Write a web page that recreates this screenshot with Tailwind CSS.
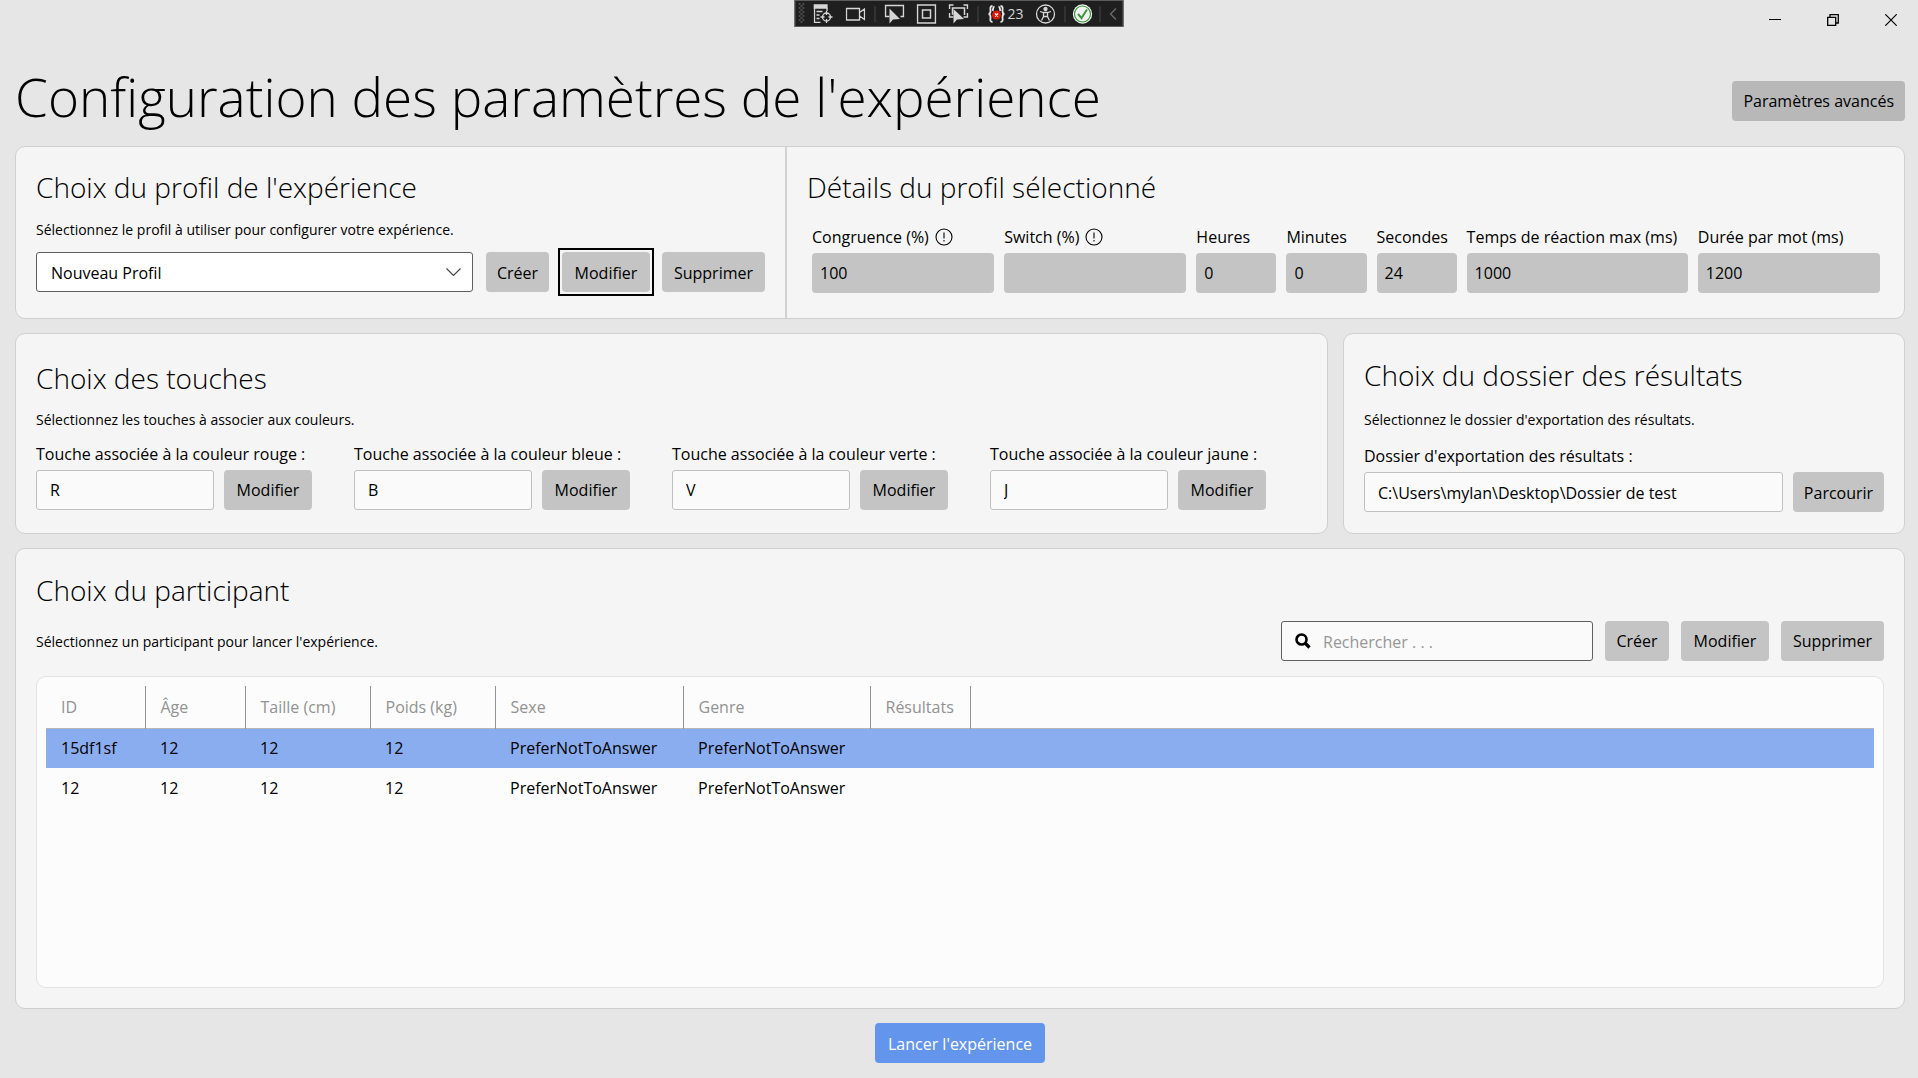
<!DOCTYPE html>
<html lang="fr">
<head>
<meta charset="utf-8">
<title>Configuration des paramètres de l'expérience</title>
<script src="https://cdn.jsdelivr.net/npm/@tailwindcss/browser@4"></script>
</head>
<body class="min-h-screen flex flex-col bg-[#e6e6e6] pl-[15px] pr-[13px] font-['Open_Sans','Noto_Sans',sans-serif] text-base leading-6 text-black">

  <!-- Debug toolbar -->
  <div class="absolute top-0 left-1/2 -translate-x-1/2 w-[329px] h-[27px] flex items-center gap-[9px] border border-[#5c5c5c] bg-[#1f1f1f] pl-[3px] text-[#d6d6d6]">
    <svg class="w-[6px] h-[21px]" viewBox="0 0 6 21" fill="#4d4d4d"><path d="M0 0h2v2H0zM4 0h2v2H4zM2 2h2v2H2zM0 4h2v2H0zM4 4h2v2H4zM2 6h2v2H2zM0 8h2v2H0zM4 8h2v2H4zM2 10h2v2H2zM0 12h2v2H0zM4 12h2v2H4zM2 14h2v2H2zM0 16h2v2H0zM4 16h2v2H4zM2 18h2v2H2z"/></svg>
    <div class="flex gap-3">
      <svg class="w-5 h-5" viewBox="0 0 20 20" fill="none" stroke="currentColor" stroke-width="1.3"><path d="M.5 1h13v3H.5z" fill="currentColor"/><path d="M1 4v14.400h6M13.500 4v3M3 7.500h6M3 11h3M3 14.500h3"/><circle cx="13" cy="13" r="4"/><path d="M13 7v4M13 15v4M7 13h4M15 13h4"/></svg>
      <svg class="w-5 h-5" viewBox="0 0 20 20" fill="none" stroke="currentColor" stroke-width="1.3"><path d="M1 4.500h13v11.500H1zM14 8.500l5-3.500v10.500l-5-3.500"/></svg>
    </div>
    <span class="w-px h-4 bg-[#474747]"></span>
    <div class="flex gap-3">
      <svg class="w-5 h-5" viewBox="0 0 20 20" fill="none" stroke="currentColor" stroke-width="1.500"><path d="M5 12.500H1V1.500h18v11h-3"/><path d="M5 4.500v15l3.500-4 7-.5z" fill="currentColor" stroke="none"/></svg>
      <svg class="w-5 h-5" viewBox="0 0 20 20" fill="none" stroke="currentColor" stroke-width="1.500"><path d="M1 1h18v18H1zM6 6h8v8H6z"/></svg>
      <svg class="w-5 h-5" viewBox="0 0 20 20" fill="none" stroke="currentColor" stroke-width="1.500"><path d="M1 5V1h4M15 1h4v4M1 9v4h4M15 13h4V9M5 10H4V4h12v7"/><path d="M5 5v14.500l3.500-4 7-.5z" fill="currentColor" stroke="none"/></svg>
    </div>
    <span class="w-px h-4 bg-[#474747]"></span>
    <div class="flex items-center gap-3">
      <span class="flex items-center gap-0.5 text-sm leading-5">
        <svg class="w-[18px] h-5" viewBox="0 0 18 20" fill="none" stroke="#e8e8e8" stroke-width="1.800"><path d="M5 2C2 2 3 5 3 7s-1 3-2 3c1 0 2 1 2 3s-1 5 2 5M13 2c3 0 2 3 2 5s1 3 2 3c-1 0-2 1-2 3s1 5-2 5M7 2.500c-2 .5-1 3-2 4.500M11 2.500c2 .5 1 3 2 4.500"/><circle cx="9" cy="11" r="4.500" fill="#e51400" stroke="none"/><path d="M7.500 9.500l3 3M10.500 9.500l-3 3" stroke="#fff" stroke-width="1.400"/></svg>
        23
      </span>
      <svg class="w-5 h-5" viewBox="0 0 20 20" fill="none" stroke="currentColor" stroke-width="1.300"><circle cx="10" cy="10" r="9"/><circle cx="10" cy="5" r="1.500" fill="currentColor"/><path d="M4.500 7.500l3.500 1h4l3.500-1M8 8.500v4L6 16.500M12 8.500v4l2 4M8 12.500h4"/></svg>
    </div>
    <div class="flex items-center gap-[7px]">
      <span class="w-px h-4 bg-[#474747]"></span>
      <svg class="w-5 h-5" viewBox="0 0 20 20" fill="none"><circle cx="10" cy="10" r="9.700" fill="#f2f2f2"/><circle cx="10" cy="10" r="8" stroke="#379a3b" stroke-width="1.200"/><path d="M5.500 10l3.500 4 5.500-8.500" stroke="#379a3b" stroke-width="2"/></svg>
      <span class="w-px h-4 bg-[#474747]"></span>
    </div>
    <svg class="w-[7px] h-3" viewBox="0 0 7 12" fill="none" stroke="#6a6a6a" stroke-width="1.400"><path d="M6.500.5L1 6l5.500 5.500"/></svg>
  </div>

  <!-- Window controls -->
  <div class="flex h-10 justify-end gap-[46px] pr-2">
    <button aria-label="Réduire" class="w-3"><svg class="w-3 h-3" viewBox="0 0 12 12" stroke="#000"><path d="M0 5.500h12"/></svg></button>
    <button aria-label="Restaurer" class="w-3"><svg class="w-3 h-3" viewBox="0 0 12 12" fill="none" stroke="#000" stroke-width="1.300"><path d="M.7 3.300h8v8h-8zM3 3V.7h8.300V9H9"/></svg></button>
    <button aria-label="Fermer" class="w-3"><svg class="w-3 h-3" viewBox="0 0 12 12" stroke="#000" stroke-width="1.200"><path d="M.3.300l11.400 11.400M11.700.300L.3 11.700"/></svg></button>
  </div>

  <header class="flex h-[106px] items-center justify-between pt-2">
    <h1 class="text-[53px] leading-[72px] font-light">Configuration des paramètres de l'expérience</h1>
    <button class="mt-2 h-10 rounded-sm bg-[#b8b8b8] px-[11px]">Paramètres avancés</button>
  </header>

  <main class="flex flex-1 flex-col gap-[14px]">
    <section class="flex h-[173px] rounded-[10px] border border-[#cfcfcf] bg-[#f5f5f5]">
      <div class="w-[771px] border-r-2 border-[#d2d2d2] pl-5 pt-5">
        <h2 class="text-[28px] leading-10 font-light">Choix du profil de l'expérience</h2>
        <p class="mt-[11px] text-sm leading-6">Sélectionnez le profil à utiliser pour configurer votre expérience.</p>
        <div class="mt-[10px] flex items-center">
          <div class="relative w-[437px]">
            <select aria-label="Profil" class="block h-10 w-full appearance-none rounded-[3px] border border-[#5f5f5f] bg-white pl-[14px] pt-px"><option>Nouveau Profil</option></select>
            <svg class="pointer-events-none absolute right-3 top-4 w-[15px] h-2" viewBox="0 0 15 8" fill="none" stroke="#444" stroke-width="1.100"><path d="M.5.500l7 7 7-7"/></svg>
          </div>
          <button class="ml-[13px] h-10 w-[63px] rounded-sm bg-[#c4c4c4] pt-px">Créer</button>
          <button class="-my-1 ml-[9px] h-12 w-24 border-2 border-black p-0.5"><span class="flex h-full items-center justify-center rounded-sm bg-[#c4c4c4] pt-px">Modifier</span></button>
          <button class="ml-2 h-10 w-[103px] rounded-sm bg-[#c4c4c4] pt-px">Supprimer</button>
        </div>
      </div>
      <div class="flex-1 pl-5 pr-6 pt-5">
        <h2 class="text-[28px] leading-10 font-light">Détails du profil sélectionné</h2>
        <div class="mt-[18px] ml-[5px] grid grid-cols-[182fr_182fr_80fr_80fr_80fr_221fr_182fr] gap-[10px] whitespace-nowrap">
          <div>
            <label for="cong" class="flex items-center gap-[6px]">Congruence (%) <svg class="w-[18px] h-[18px]" viewBox="0 0 18 18" fill="none" stroke="#000" stroke-width="1.100"><circle cx="9" cy="9" r="8"/><path d="M9 4.500v6M9 12v1.500"/></svg></label>
            <input id="cong" readonly value="100" class="mt-1 h-10 w-full rounded-sm bg-[#c4c4c4] px-2">
          </div>
          <div>
            <label for="switch" class="flex items-center gap-[6px]">Switch (%) <svg class="w-[18px] h-[18px]" viewBox="0 0 18 18" fill="none" stroke="#000" stroke-width="1.100"><circle cx="9" cy="9" r="8"/><path d="M9 4.500v6M9 12v1.500"/></svg></label>
            <input id="switch" readonly class="mt-1 h-10 w-full rounded-sm bg-[#c4c4c4] px-2">
          </div>
          <div><label for="heures" class="block">Heures</label><input id="heures" readonly value="0" class="mt-1 h-10 w-full rounded-sm bg-[#c4c4c4] px-2"></div>
          <div><label for="minutes" class="block">Minutes</label><input id="minutes" readonly value="0" class="mt-1 h-10 w-full rounded-sm bg-[#c4c4c4] px-2"></div>
          <div><label for="secondes" class="block">Secondes</label><input id="secondes" readonly value="24" class="mt-1 h-10 w-full rounded-sm bg-[#c4c4c4] px-2"></div>
          <div><label for="reaction" class="block">Temps de réaction max (ms)</label><input id="reaction" readonly value="1000" class="mt-1 h-10 w-full rounded-sm bg-[#c4c4c4] px-2"></div>
          <div><label for="duree" class="block">Durée par mot (ms)</label><input id="duree" readonly value="1200" class="mt-1 h-10 w-full rounded-sm bg-[#c4c4c4] px-2"></div>
        </div>
      </div>
    </section>

    <div class="grid h-[201px] grid-cols-[1313fr_562fr] gap-[15px]">
      <section class="rounded-[10px] border border-[#cfcfcf] bg-[#f5f5f5] pl-5 pt-6">
        <h2 class="text-[28px] leading-10 font-light">Choix des touches</h2>
        <p class="mt-[10px] text-sm leading-6">Sélectionnez les touches à associer aux couleurs.</p>
        <div class="mt-[10px] flex gap-[42px] whitespace-nowrap">
          <div class="w-[276px]"><label for="rouge" class="block">Touche associée à la couleur rouge :</label><div class="mt-1 flex gap-[10px]"><input id="rouge" readonly value="R" class="h-10 min-w-0 flex-1 rounded-[3px] border border-[#c0c0c0] bg-[#fafafa] px-[13px]"><button class="h-10 w-[88px] rounded-sm bg-[#c4c4c4]">Modifier</button></div></div>
          <div class="w-[276px]"><label for="bleue" class="block">Touche associée à la couleur bleue :</label><div class="mt-1 flex gap-[10px]"><input id="bleue" readonly value="B" class="h-10 min-w-0 flex-1 rounded-[3px] border border-[#c0c0c0] bg-[#fafafa] px-[13px]"><button class="h-10 w-[88px] rounded-sm bg-[#c4c4c4]">Modifier</button></div></div>
          <div class="w-[276px]"><label for="verte" class="block">Touche associée à la couleur verte :</label><div class="mt-1 flex gap-[10px]"><input id="verte" readonly value="V" class="h-10 min-w-0 flex-1 rounded-[3px] border border-[#c0c0c0] bg-[#fafafa] px-[13px]"><button class="h-10 w-[88px] rounded-sm bg-[#c4c4c4]">Modifier</button></div></div>
          <div class="w-[276px]"><label for="jaune" class="block">Touche associée à la couleur jaune :</label><div class="mt-1 flex gap-[10px]"><input id="jaune" readonly value="J" class="h-10 min-w-0 flex-1 rounded-[3px] border border-[#c0c0c0] bg-[#fafafa] px-[13px]"><button class="h-10 w-[88px] rounded-sm bg-[#c4c4c4]">Modifier</button></div></div>
        </div>
      </section>
      <section class="rounded-[10px] border border-[#cfcfcf] bg-[#f5f5f5] px-5 pt-[21px]">
        <h2 class="text-[28px] leading-10 font-light">Choix du dossier des résultats</h2>
        <p class="mt-[13px] text-sm leading-6">Sélectionnez le dossier d'exportation des résultats.</p>
        <label for="dossier" class="mt-3 block">Dossier d'exportation des résultats :</label>
        <div class="mt-1 flex gap-[10px]">
          <input id="dossier" value="C:\Users\mylan\Desktop\Dossier de test" class="h-10 min-w-0 flex-1 rounded-[3px] border border-[#c0c0c0] bg-[#fafafa] px-[13px] pt-px">
          <button class="h-10 w-[91px] rounded-sm bg-[#c4c4c4] pt-px">Parcourir</button>
        </div>
      </section>
    </div>

    <section class="flex flex-1 flex-col rounded-[10px] border border-[#cfcfcf] bg-[#f5f5f5] px-5 pb-5 pt-[21px]">
      <h2 class="text-[28px] leading-10 font-light">Choix du participant</h2>
      <div class="mt-[11px] flex items-center justify-between">
        <p class="pt-px text-sm leading-6">Sélectionnez un participant pour lancer l'expérience.</p>
        <div class="flex gap-3">
          <div class="relative w-[312px]">
            <svg class="absolute left-[14px] top-3 w-4 h-4" viewBox="0 0 16 16" fill="none" stroke="#000" stroke-width="2.600"><circle cx="6.500" cy="6.500" r="5"/><path d="M10 10l4.500 4.500" stroke-width="3.200"/></svg>
            <input type="search" aria-label="Rechercher" placeholder="Rechercher . . ." class="block h-10 w-full rounded-[3px] border border-[#5f5f5f] bg-[#fafafa] pl-[41px] pt-px placeholder:text-[#969696]">
          </div>
          <button class="h-10 w-16 rounded-sm bg-[#c4c4c4]">Créer</button>
          <button class="h-10 w-[88px] rounded-sm bg-[#c4c4c4]">Modifier</button>
          <button class="h-10 w-[103px] rounded-sm bg-[#c4c4c4]">Supprimer</button>
        </div>
      </div>
      <div class="mt-[15px] flex-1 rounded-[10px] border border-[#e2e2e2] bg-[#fcfcfc] px-[9px] pt-[9px]">
        <table class="w-full table-fixed text-left">
          <colgroup><col class="w-[99px]"><col class="w-[100px]"><col class="w-[125px]"><col class="w-[125px]"><col class="w-[188px]"><col class="w-[187px]"><col class="w-[100px]"><col></colgroup>
          <thead>
            <tr class="h-[42px] border-b border-[#b5b5b5] text-[#929292]">
              <th class="border-r border-[#929292] px-[15px] font-normal">ID</th><th class="border-r border-[#929292] px-[15px] font-normal">Âge</th><th class="border-r border-[#929292] px-[15px] font-normal">Taille (cm)</th><th class="border-r border-[#929292] px-[15px] font-normal">Poids (kg)</th><th class="border-r border-[#929292] px-[15px] font-normal">Sexe</th><th class="border-r border-[#929292] px-[15px] font-normal">Genre</th><th class="border-r border-[#929292] px-[15px] font-normal">Résultats</th><td></td>
            </tr>
          </thead>
          <tbody>
            <tr class="h-10 bg-[#8aadf0]"><td class="px-[15px]">15df1sf</td><td class="px-[15px]">12</td><td class="px-[15px]">12</td><td class="px-[15px]">12</td><td class="px-[15px]">PreferNotToAnswer</td><td class="px-[15px]">PreferNotToAnswer</td><td></td><td></td></tr>
            <tr class="h-10"><td class="px-[15px]">12</td><td class="px-[15px]">12</td><td class="px-[15px]">12</td><td class="px-[15px]">12</td><td class="px-[15px]">PreferNotToAnswer</td><td class="px-[15px]">PreferNotToAnswer</td><td></td><td></td></tr>
          </tbody>
        </table>
      </div>
    </section>
  </main>

  <footer class="flex h-[69px] justify-center pt-[14px]">
    <button class="h-10 w-[170px] rounded-sm bg-[#6495ed] pt-px text-white">Lancer l'expérience</button>
  </footer>
</body>
</html>
